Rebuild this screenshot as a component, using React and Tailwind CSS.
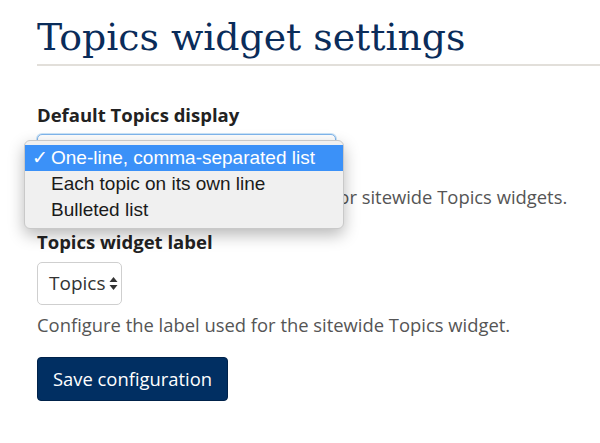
import { useState } from "react";

const OPTIONS = ["One-line, comma-separated list", "Each topic on its own line", "Bulleted list"];

const SelectArrows = () => (
    <svg className="ml-[4px] h-[15px] w-[9px]" viewBox="0 0 9 15" fill="#333">
        <path d="M4.5 1 L8.5 6 H0.5 Z" />
        <path d="M4.5 14 L8.5 9 H0.5 Z" />
    </svg>
);

const App = () => {
    const [display] = useState(OPTIONS[0]);

    return (
        <div className="min-h-[443px] bg-white pl-[37px] pt-[13px] font-['Open_Sans',sans-serif] text-[#222]">
            <h1 className="border-b-2 border-[#e2dfda] pb-[3px] font-['DejaVu_Serif',serif] text-[37.8px] leading-[48px] text-[#0a2c5a]">
                Topics widget settings
            </h1>

            <form className="pt-[36px]">
                <label className="block text-[18.5px] font-bold leading-[26px]">Default Topics display</label>

                <div className="relative mt-[6px] w-[299px]">
                    <div className="h-[43px] rounded-[5px] border border-[#7fb5ec] bg-white shadow-[0_0_0_1px_rgba(102,175,233,0.35)]" />

                    {/* open native menu */}
                    <ul className="absolute left-[-13px] top-[6px] z-10 w-[320px] rounded-[6px] border border-[#c9c9c9] bg-[#f0f0f0] pb-[5px] pt-[4px] font-['Liberation_Sans',sans-serif] text-[19px] text-[#1a1a1a] shadow-[0_6px_16px_rgba(0,0,0,0.28)]">
                        {OPTIONS.map((o) => (
                            <li
                                key={o}
                                className={`flex h-[26px] items-center pl-[7px] ${o === display ? "bg-[#3b91f8] text-white" : ""}`}
                            >
                                <span className="w-[19px]">{o === display ? "✓" : ""}</span>
                                {o}
                            </li>
                        ))}
                    </ul>
                </div>

                <p className="mt-[7px] text-[18.4px] leading-[26px] text-[#555]">
                    Choose the default display format for sitewide Topics widgets.
                </p>

                <label className="mt-[19px] block text-[18.5px] font-bold leading-[26px]">Topics widget label</label>

                <div className="mt-[7px] flex h-[43px] w-[85px] items-center rounded-[5px] border border-[#cfcfcf] bg-white pl-[11px] text-[19px] text-[#333]">
                    Topics
                    <SelectArrows />
                </div>

                <p className="mt-[7px] text-[18.4px] leading-[26px] text-[#555]">
                    Configure the label used for the sitewide Topics widget.
                </p>

                <button
                    type="button"
                    className="mt-[19px] h-[44px] w-[191px] rounded-[4px] border border-[#00224a] bg-[#012f62] text-[18.4px] text-white"
                >
                    Save configuration
                </button>
            </form>
        </div>
    );
};

export default App;
